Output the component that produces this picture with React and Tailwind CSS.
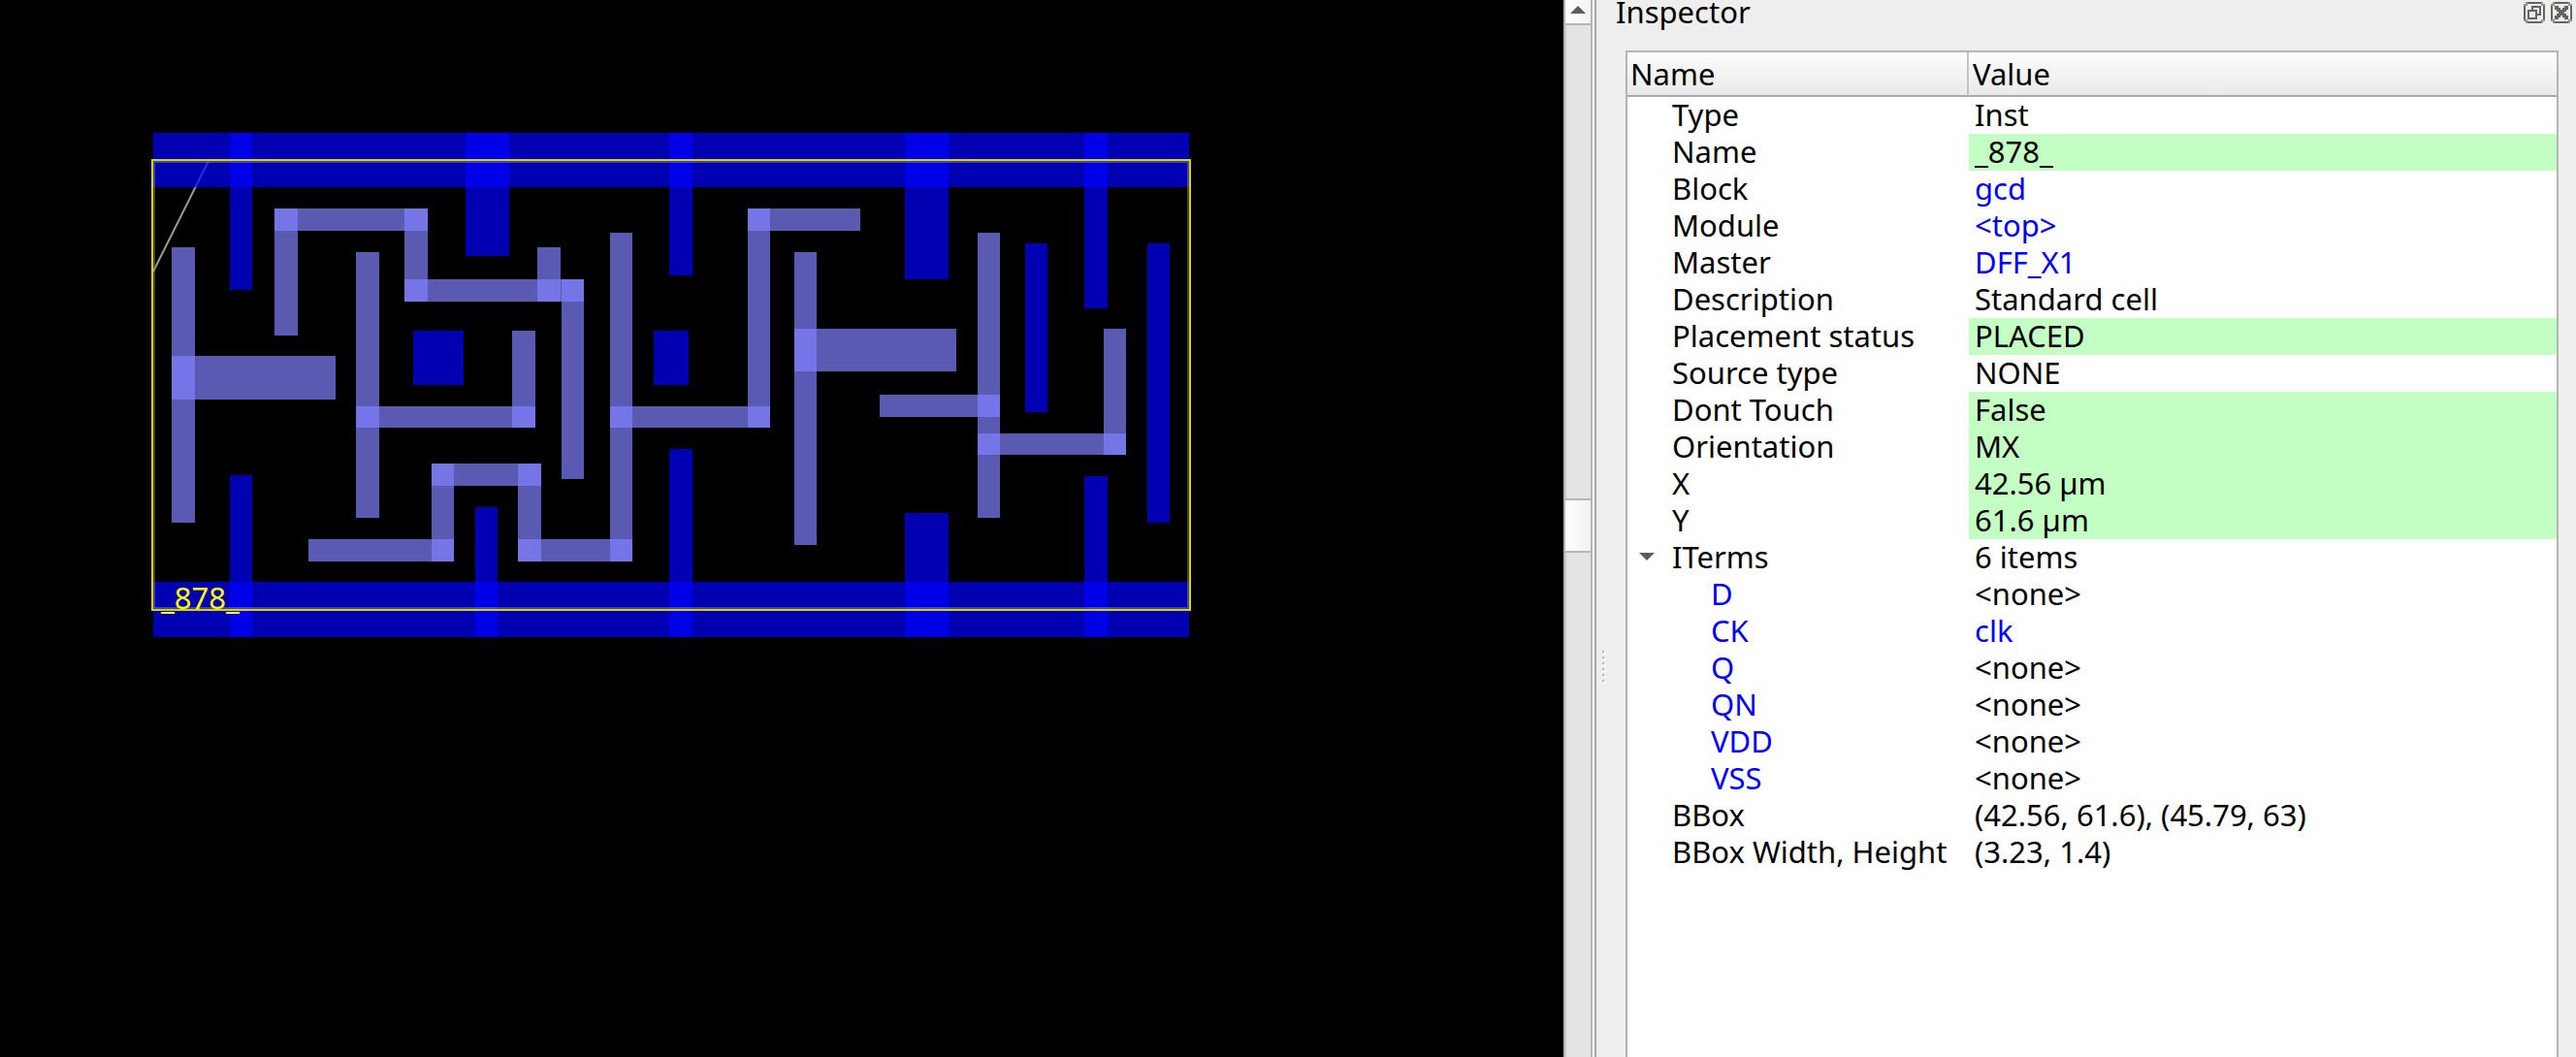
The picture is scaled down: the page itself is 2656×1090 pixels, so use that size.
import React, { useState } from "react";

// x1, y1, x2, y2 of the metal shapes
const POWER = [
  [158, 137, 1226, 193],
  [158, 600, 1226, 657],
  [237, 137, 260, 299],
  [237, 490, 260, 657],
  [480, 137, 525, 264],
  [490, 523, 513, 657],
  [690, 137, 714, 284],
  [690, 463, 714, 657],
  [933, 137, 978, 288],
  [933, 529, 978, 657],
  [1118, 137, 1142, 318],
  [1118, 491, 1142, 657],
  [426, 341, 478, 397],
  [674, 341, 710, 397],
  [1057, 251, 1080, 425],
  [1183, 251, 1206, 539],
];

const SIGNAL = [
  [177, 255, 201, 539],
  [177, 367, 346, 412],
  [283, 215, 307, 346],
  [283, 215, 441, 238],
  [417, 215, 441, 311],
  [417, 288, 602, 311],
  [554, 255, 578, 311],
  [579, 288, 602, 494],
  [528, 341, 552, 441],
  [367, 260, 391, 534],
  [367, 419, 552, 441],
  [629, 240, 652, 579],
  [629, 419, 794, 441],
  [771, 215, 794, 441],
  [771, 215, 887, 238],
  [819, 260, 842, 562],
  [819, 339, 986, 383],
  [1008, 240, 1031, 534],
  [907, 407, 1031, 430],
  [1008, 447, 1161, 469],
  [1138, 339, 1161, 469],
  [318, 556, 468, 579],
  [445, 478, 468, 579],
  [445, 478, 558, 501],
  [534, 478, 558, 579],
  [534, 556, 652, 579],
];

const PROPERTIES = [
  { name: "Type", value: "Inst" },
  { name: "Name", value: "_878_", editable: true },
  { name: "Block", value: "gcd", link: true },
  { name: "Module", value: "<top>", link: true },
  { name: "Master", value: "DFF_X1", link: true },
  { name: "Description", value: "Standard cell" },
  { name: "Placement status", value: "PLACED", editable: true },
  { name: "Source type", value: "NONE" },
  { name: "Dont Touch", value: "False", editable: true },
  { name: "Orientation", value: "MX", editable: true },
  { name: "X", value: "42.56 µm", editable: true },
  { name: "Y", value: "61.6 µm", editable: true },
  {
    name: "ITerms",
    value: "6 items",
    children: [
      { name: "D", value: "<none>" },
      { name: "CK", value: "clk", link: true },
      { name: "Q", value: "<none>" },
      { name: "QN", value: "<none>" },
      { name: "VDD", value: "<none>" },
      { name: "VSS", value: "<none>" },
    ],
  },
  { name: "BBox", value: "(42.56, 61.6), (45.79, 63)" },
  { name: "BBox Width, Height", value: "(3.23, 1.4)" },
];

function Shapes({ rects, fill }) {
  return (
    <g fill={fill} fillOpacity="0.7">
      {rects.map(([x1, y1, x2, y2], i) => (
        <rect key={i} x={x1} y={y1} width={x2 - x1} height={y2 - y1} />
      ))}
    </g>
  );
}

function LayoutView() {
  return (
    <main id="layout" className="min-w-0 overflow-hidden bg-black pt-[136px] pl-[156px]">
      <svg
        className="block h-[524px] w-[1072px]"
        viewBox="156 136 1072 524"
        shapeRendering="crispEdges"
        role="img"
        aria-label="Standard cell _878_"
      >
        <path d="M158 280 L215 166" stroke="#9a9a9a" strokeWidth="2" shapeRendering="auto" />
        <Shapes rects={POWER} fill="#0000ff" />
        <Shapes rects={SIGNAL} fill="#8080ff" />
        <rect x="159" y="167" width="1066" height="460" fill="none" stroke="#a09c60" strokeOpacity="0.45" strokeWidth="2" />
        <rect x="157" y="165" width="1070" height="464" fill="none" stroke="#d4ce28" strokeWidth="2" />
        <text
          x="166"
          y="628"
          fill="#ffff00"
          className="font-['Noto_Sans',sans-serif] text-[31px]"
        >
          _878_
        </text>
      </svg>
    </main>
  );
}

function ScrollBar() {
  return (
    <div className="flex w-8 flex-col border-r-2 border-white">
      <button
        type="button"
        aria-label="Scroll up"
        className="flex h-[26px] shrink-0 items-center justify-center border-x-2 border-b-2 border-[#b5b5b5] bg-linear-to-r from-white to-[#f2f2f2]"
      >
        <svg className="-mt-1 h-2 w-4" viewBox="0 0 16 8" fill="#5c5c5c">
          <path d="M8 0 L16 8 H0 Z" />
        </svg>
      </button>
      <div
        role="scrollbar"
        aria-controls="layout"
        aria-valuenow={50}
        className="flex grow flex-col border-x-2 border-[#b5b5b5] bg-[#e4e4e4]"
      >
        <div className="grow-[488] basis-0 border-l-2 border-[#dadada]" />
        <div className="h-14 shrink-0 border-y-2 border-[#b5b5b5] bg-linear-to-r from-white to-[#f2f2f2]" />
        <div className="grow-[520] basis-0 border-l-2 border-[#dadada]" />
      </div>
    </div>
  );
}

function Splitter() {
  return (
    <div className="flex w-[30px] shrink-0 flex-col justify-center gap-1 pt-58 pl-1.5">
      {[0, 1, 2, 3, 4, 5].map((i) => (
        <span key={i} className="size-0.5 bg-[#b5b5b5] shadow-[2px_2px_0_#f8f8f8]" />
      ))}
    </div>
  );
}

function TitleButton({ label, children }) {
  return (
    <button type="button" aria-label={label} className="size-[22px]">
      <svg className="size-full" viewBox="0 0 11 11" shapeRendering="crispEdges">
        <path
          fill="#66645f"
          d="M2 0H9V1H2Z M2 10H9V11H2Z M0 2H1V9H0Z M10 2H11V9H10Z"
        />
        <path
          fill="#96948f"
          d="M1 0H2V1H1Z M0 1H2V2H0Z M9 0H10V1H9Z M9 1H11V2H9Z M1 10H2V11H1Z M0 9H2V10H0Z M9 10H10V11H9Z M9 9H11V10H9Z"
        />
        {children}
      </svg>
    </button>
  );
}

function TitleBar() {
  return (
    <header className="flex h-[52px] shrink-0 items-start justify-between pr-1 pl-5">
      <h1 className="leading-6">Inspector</h1>
      <div className="flex gap-1.5 pt-0.5">
        <TitleButton label="Float">
          <path
            fill="#66645f"
            fillRule="evenodd"
            d="M2 4H7V9H2Z M3 5V8H6V5Z M4 2H9V3H4Z M8 3H9V7H8Z M4 3H5V4H4Z M7 6H8V7H7Z"
          />
        </TitleButton>
        <TitleButton label="Close">
          <path
            fill="#66645f"
            d="M2 2H4V3H5V4H6V3H7V2H9V4H8V5H7V6H8V7H9V9H7V8H6V7H5V8H4V9H2V7H3V6H4V5H3V4H2Z"
          />
        </TitleButton>
      </div>
    </header>
  );
}

function Link({ children }) {
  return (
    <a href="#" className="text-[#0000ff]">
      {children}
    </a>
  );
}

function Row({ item, child, open, onToggle }) {
  return (
    <tr className="h-[38px] align-top leading-9">
      <td className={child ? "p-0 pl-[86px]" : "relative p-0 pl-[46px]"}>
        {item.children && (
          <button
            type="button"
            aria-label="Toggle ITerms"
            aria-expanded={open}
            onClick={onToggle}
            className="absolute top-0 left-3 flex h-9 w-4 items-center"
          >
            <svg className="h-2 w-4" viewBox="0 0 16 8" fill="#5c5c5c">
              <path d="M0 0 H16 L8 8 Z" />
            </svg>
          </button>
        )}
        {child ? <Link>{item.name}</Link> : item.name}
      </td>
      <td className={item.editable ? "bg-[#c4ffc4] p-0 pl-1.5" : "p-0 pl-1.5"}>
        {item.link ? <Link>{item.value}</Link> : item.value}
      </td>
    </tr>
  );
}

function PropertyTable() {
  const [open, setOpen] = useState(true);
  return (
    <div className="min-h-0 grow overflow-hidden border-2 border-b-0 border-[#b5b5b5] bg-white">
      <table className="w-full table-fixed border-separate border-spacing-0 text-left whitespace-nowrap">
        <thead>
          <tr className="h-[46px] bg-linear-to-b from-[#fdfdfd] to-[#e9e9e9] leading-[44px]">
            <th className="w-[352px] border-r-2 border-b-2 border-r-[#c4c4c4] border-b-[#a9a9a9] p-0 pl-[3px] font-normal">
              Name
            </th>
            <th className="border-b-2 border-[#a9a9a9] p-0 pl-1 font-normal">Value</th>
          </tr>
        </thead>
        <tbody>
          {PROPERTIES.map((item) => (
            <React.Fragment key={item.name}>
              <Row item={item} open={open} onToggle={() => setOpen(!open)} />
              {item.children &&
                open &&
                item.children.map((c) => <Row key={c.name} item={c} child />)}
            </React.Fragment>
          ))}
        </tbody>
      </table>
    </div>
  );
}

export default function App() {
  return (
    <div className="grid h-screen grid-cols-[1612fr_auto_1012fr] overflow-hidden bg-[#eeeeee] font-['Noto_Sans',sans-serif] text-[31px] text-black">
      <LayoutView />
      <ScrollBar />
      <aside className="flex min-w-0 flex-col border-l-2 border-[#a9a9a9]">
        <TitleBar />
        <div className="flex min-h-0 grow pr-[18px]">
          <Splitter />
          <PropertyTable />
        </div>
      </aside>
    </div>
  );
}
